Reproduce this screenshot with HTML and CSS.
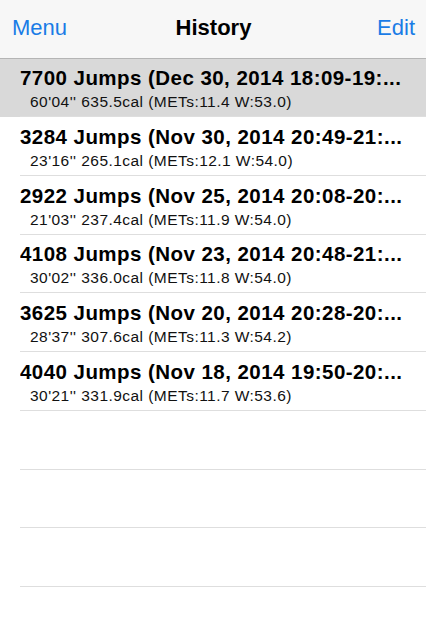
FILE: index.html
```html
<!DOCTYPE html>
<html lang="en">
<head>
    <meta charset="UTF-8">
    <meta name="viewport" content="width=device-width, initial-scale=1.0">
    <title>History</title>
    <link rel="stylesheet" href="styles.css">
</head>
<body>

<div class="navbar">
    <a class="nav-button" href="#">Menu</a>
    <h1 class="nav-title">History</h1>
    <a class="nav-button right" href="#">Edit</a>
</div>

<ul class="history">
    <li class="row selected">
        <div class="row-title">7700 Jumps (Dec 30, 2014 18:09-19:...</div>
        <div class="row-detail">60'04'' 635.5cal (METs:11.4 W:53.0)</div>
    </li>
    <li class="row">
        <div class="row-title">3284 Jumps (Nov 30, 2014 20:49-21:...</div>
        <div class="row-detail">23'16'' 265.1cal (METs:12.1 W:54.0)</div>
    </li>
    <li class="row">
        <div class="row-title">2922 Jumps (Nov 25, 2014 20:08-20:...</div>
        <div class="row-detail">21'03'' 237.4cal (METs:11.9 W:54.0)</div>
    </li>
    <li class="row">
        <div class="row-title">4108 Jumps (Nov 23, 2014 20:48-21:...</div>
        <div class="row-detail">30'02'' 336.0cal (METs:11.8 W:54.0)</div>
    </li>
    <li class="row">
        <div class="row-title">3625 Jumps (Nov 20, 2014 20:28-20:...</div>
        <div class="row-detail">28'37'' 307.6cal (METs:11.3 W:54.2)</div>
    </li>
    <li class="row">
        <div class="row-title">4040 Jumps (Nov 18, 2014 19:50-20:...</div>
        <div class="row-detail">30'21'' 331.9cal (METs:11.7 W:53.6)</div>
    </li>
    <li class="row empty"></li>
    <li class="row empty"></li>
    <li class="row empty"></li>
    <li class="row empty"></li>
</ul>

</body>
</html>
```

FILE: styles.css
```css
/* Page */
body {
    margin: 0;
    font-family: "Liberation Sans", Arial, sans-serif;
    background-color: #ffffff;
    color: #000000;
    width: 426px;
    height: 640px;
    overflow: hidden;
}

/* Top navigation bar */
.navbar {
    height: 58.7px;
    box-sizing: border-box;
    background-color: #f7f7f7;
    border-bottom: 1px solid #b5b5b5;
    display: grid;
    grid-template-columns: 1fr auto 1fr;
    align-items: center;
    padding: 0 11px 1px 12px;
}

.nav-button {
    color: #1a7ce6;
    text-decoration: none;
    font-size: 22px;
}

.nav-button.right {
    justify-self: end;
}

.nav-title {
    margin: 0;
    font-size: 22px;
    font-weight: bold;
}

/* Table rows */
.history {
    list-style: none;
    margin: 0;
    padding: 0;
}

.row {
    height: 58.7px;
    box-sizing: border-box;
    padding: 7.6px 0 0 20px;
    position: relative;
}

/* Inset separator line */
.row::after {
    content: "";
    position: absolute;
    left: 20px;
    right: 0;
    bottom: 0;
    border-bottom: 1px solid #dedede;
}

.row.selected {
    background-color: #d9d9d9;
}

.row-title {
    font-size: 20.5px;
    font-weight: bold;
    letter-spacing: 0.45px;
    line-height: 24px;
    white-space: nowrap;
    overflow: hidden;
    text-overflow: ellipsis;
}

.row-detail {
    font-size: 15.5px;
    letter-spacing: 0.45px;
    line-height: 20px;
    margin-top: 2px;
    padding-left: 10px;
    color: #111;
}
```
